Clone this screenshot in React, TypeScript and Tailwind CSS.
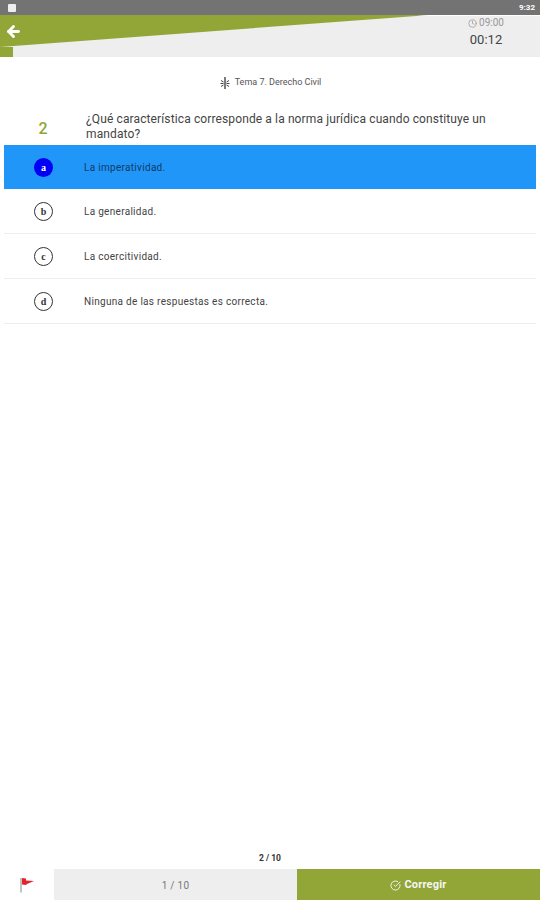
import { ArrowLeft, Clock, CircleCheckBig } from "lucide-react";

interface Answer {
  letter: string;
  text: string;
}

const answers: Answer[] = [
  { letter: "a", text: "La imperatividad." },
  { letter: "b", text: "La generalidad." },
  { letter: "c", text: "La coercitividad." },
  { letter: "d", text: "Ninguna de las respuestas es correcta." },
];

export default function App() {
  return (
    <div className="min-h-[900px] h-[900px] bg-white flex flex-col font-['Roboto',sans-serif] text-[#444]">
      {/* Status bar */}
      <div className="h-[15px] bg-[#737373] flex items-center justify-between pl-2 pr-[5px]">
        <div className="w-2 h-2 rounded-[1px] bg-[#eee]" />
        <span className="text-[8px] font-bold text-white">9:32</span>
      </div>

      {/* Header */}
      <header className="relative h-[42px] bg-[#eeeeee] flex justify-between">
        <svg className="absolute inset-0" width="540" height="42" viewBox="0 0 540 42">
          <polygon points="0,0 430,0 0,32" fill="#91a637" />
          <rect x="0" y="32" width="13" height="10" fill="#91a637" />
          <polygon points="430,0 540,0 540,1 417,1" fill="#ffffff" />
        </svg>
        <div className="relative pl-[5px] pt-[8px] text-white">
          <ArrowLeft size={17} strokeWidth={4} />
        </div>
        <div className="relative w-[74px] mr-[17px] flex flex-col items-center pt-[2px]">
          <div className="flex items-center gap-[2px] text-[10px] leading-[12px] text-[#999]">
            <Clock size={9} />
            <span>09:00</span>
          </div>
          <span className="text-[13px] leading-[17px] mt-[2px] text-[#444]">00:12</span>
        </div>
      </header>

      {/* Topic */}
      <div className="mt-[19px] h-[14px] flex items-center justify-center gap-[5px] text-[9px] text-[#555] pl-[1px]">
        <svg width="10" height="12" viewBox="0 0 10 12" fill="none" stroke="#444">
          <path d="M5 0v12" strokeWidth="1.4" />
          <path d="M1 3.5 3.5 5M9 3.5 6.500 5M0.500 6.500h3M9.500 6.500h-3M1 9.500 3.500 8M9 9.500 6.500 8" strokeWidth="1" />
        </svg>
        <span>Tema 7. Derecho Civil</span>
      </div>

      {/* Question */}
      <div className="mt-[22px] mx-1 flex items-center">
        <span className="w-[78px] shrink-0 text-center text-[16px] font-medium text-[#91a637] mt-[3px]">2</span>
        <p className="pl-[4px] text-[12px] leading-[15px] tracking-[0.12px] text-[#444]">
          ¿Qué característica corresponde a la norma jurídica cuando constituye un mandato?
        </p>
      </div>

      {/* Answers */}
      <div className="mt-[3px] mx-1 flex flex-col">
        {answers.map((answer, i) =>
          i === 0 ? (
            <div key={answer.letter} className="h-[44px] bg-[#2196f9] flex items-center">
              <div className="w-[79px] flex justify-center">
                <span className="w-[19px] h-[19px] rounded-full bg-[#0000f5] flex items-center justify-center text-[10px] font-bold text-white font-['Liberation_Serif',serif]">
                  {answer.letter}
                </span>
              </div>
              <span className="pl-[1px] text-[10px] tracking-[0.3px] text-[#123a63]">{answer.text}</span>
            </div>
          ) : (
            <div key={answer.letter} className="h-[45px] border-b border-[#eeeeee] flex items-center">
              <div className="w-[79px] flex justify-center">
                <span className="w-[19px] h-[19px] rounded-full border-[1.5px] border-[#333] flex items-center justify-center text-[10px] font-bold text-[#333] font-['Liberation_Serif',serif]">
                  {answer.letter}
                </span>
              </div>
              <span className="pl-[1px] text-[10px] tracking-[0.3px] text-[#444]">{answer.text}</span>
            </div>
          )
        )}
      </div>

      {/* Footer */}
      <div className="mt-auto">
        <div className="h-[12px] mb-[5px] flex items-center justify-center text-[8.5px] font-bold text-[#333]">2 / 10</div>
        <div className="h-[31px] flex">
          <div className="w-[54px] flex items-center justify-center pr-[1px]">
            <svg width="16" height="16" viewBox="0 0 16 16">
              <path d="M2 1v14.500" stroke="#aaa" strokeWidth="1.400" />
              <path d="M3 1 7 1.500 7 3.500 15 4 8 7 7 8 3 7.500Z" fill="#e3232c" />
            </svg>
          </div>
          <div className="w-[243px] pt-[1px] bg-[#eeeeee] flex items-center justify-center text-[10px] tracking-[0.3px] text-[#777]">
            1 / 10
          </div>
          <div className="flex-1 pt-[2px] bg-[#91a637] flex items-center justify-center gap-[3px] text-[11px] tracking-[0.2px] font-bold text-[#f5f5f5]">
            <CircleCheckBig size={11} />
            <span>Corregir</span>
          </div>
        </div>
      </div>
    </div>
  );
}
